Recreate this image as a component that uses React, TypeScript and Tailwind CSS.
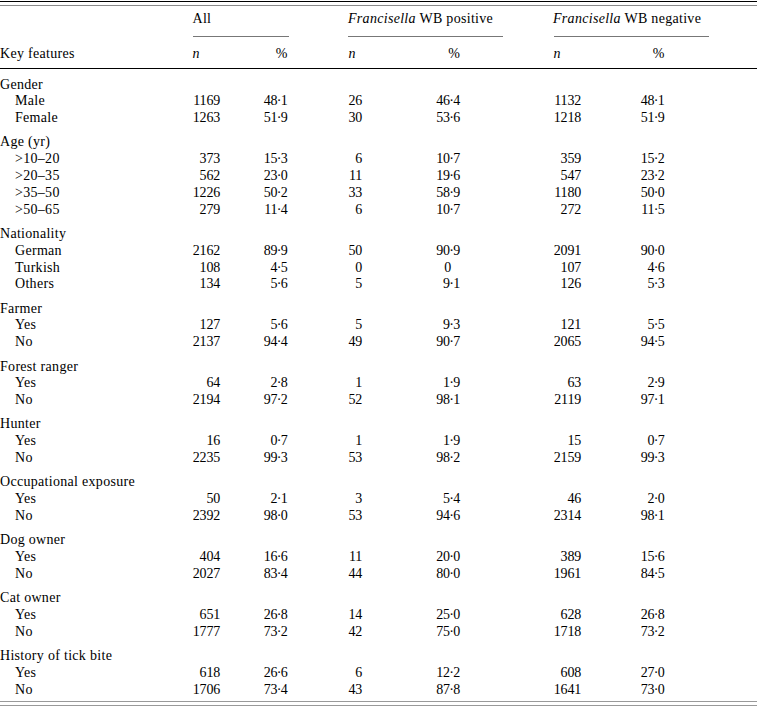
type Row = [string, string, string, string, string, string, string];

const groups: { title: string; rows: Row[] }[] = [
  {
    title: "Gender",
    rows: [
      ["Male", "1169", "48·1", "26", "46·4", "1132", "48·1"],
      ["Female", "1263", "51·9", "30", "53·6", "1218", "51·9"],
    ],
  },
  {
    title: "Age (yr)",
    rows: [
      [">10–20", "373", "15·3", "6", "10·7", "359", "15·2"],
      [">20–35", "562", "23·0", "11", "19·6", "547", "23·2"],
      [">35–50", "1226", "50·2", "33", "58·9", "1180", "50·0"],
      [">50–65", "279", "11·4", "6", "10·7", "272", "11·5"],
    ],
  },
  {
    title: "Nationality",
    rows: [
      ["German", "2162", "89·9", "50", "90·9", "2091", "90·0"],
      ["Turkish", "108", "4·5", "0", "0", "107", "4·6"],
      ["Others", "134", "5·6", "5", "9·1", "126", "5·3"],
    ],
  },
  {
    title: "Farmer",
    rows: [
      ["Yes", "127", "5·6", "5", "9·3", "121", "5·5"],
      ["No", "2137", "94·4", "49", "90·7", "2065", "94·5"],
    ],
  },
  {
    title: "Forest ranger",
    rows: [
      ["Yes", "64", "2·8", "1", "1·9", "63", "2·9"],
      ["No", "2194", "97·2", "52", "98·1", "2119", "97·1"],
    ],
  },
  {
    title: "Hunter",
    rows: [
      ["Yes", "16", "0·7", "1", "1·9", "15", "0·7"],
      ["No", "2235", "99·3", "53", "98·2", "2159", "99·3"],
    ],
  },
  {
    title: "Occupational exposure",
    rows: [
      ["Yes", "50", "2·1", "3", "5·4", "46", "2·0"],
      ["No", "2392", "98·0", "53", "94·6", "2314", "98·1"],
    ],
  },
  {
    title: "Dog owner",
    rows: [
      ["Yes", "404", "16·6", "11", "20·0", "389", "15·6"],
      ["No", "2027", "83·4", "44", "80·0", "1961", "84·5"],
    ],
  },
  {
    title: "Cat owner",
    rows: [
      ["Yes", "651", "26·8", "14", "25·0", "628", "26·8"],
      ["No", "1777", "73·2", "42", "75·0", "1718", "73·2"],
    ],
  },
  {
    title: "History of tick bite",
    rows: [
      ["Yes", "618", "26·6", "6", "12·2", "608", "27·0"],
      ["No", "1706", "73·4", "43", "87·8", "1641", "73·0"],
    ],
  },
];

const cols =
  "grid grid-cols-[192.5px_27.5px_67.5px_61px_13.5px_98px_93.5px_27.5px_83.5px_1fr] h-[16.8px] leading-[16.8px]";

// numbers use a raised point that sits tight between digits
const Num = ({ v, className = "" }: { v: string; className?: string }) => {
  const [a, b] = v.split("·");
  return (
    <span className={`whitespace-nowrap text-right tracking-[-0.2px] ${className}`}>
      {a}
      {b !== undefined && (
        <>
          <span className="mx-[-0.6px]">·</span>
          {b}
        </>
      )}
    </span>
  );
};

const App = () => {
  return (
    <div className="bg-white w-[757px] h-[706px] overflow-hidden font-['Liberation_Serif','Times_New_Roman',serif] text-[14px] text-black">
      {/* double rule on top */}
      <div className="mt-[1px] border-t border-black" />
      <div className="mt-[2.5px] border-t border-[#8a8a8a]" />

      {/* column group heads */}
      <div className="mt-[5.4px] flex h-[16.8px] leading-[16.8px] tracking-[0.3px]">
        <div className="w-[192.5px]" />
        <div className="w-[155.5px]">All</div>
        <div className="w-[205px]">
          <i>Francisella</i> WB positive
        </div>
        <div>
          <i>Francisella</i> WB negative
        </div>
      </div>
      <div className="mt-[8.6px] flex">
        <div className="w-[192.5px]" />
        <div className="w-[96px] border-t border-[#777]" />
        <div className="w-[59.5px]" />
        <div className="w-[155px] border-t border-[#777]" />
        <div className="w-[50.5px]" />
        <div className="w-[155px] border-t border-[#777]" />
      </div>
      <div className={`${cols} mt-[8.4px]`}>
        <span className="tracking-[0.3px]">Key features</span>
        <i>n</i>
        <span className="text-right">%</span>
        <span />
        <i>n</i>
        <span className="text-right">%</span>
        <span />
        <i>n</i>
        <span className="text-right">%</span>
      </div>
      <div className="mt-[5.6px] border-t border-black" />

      {/* body */}
      {groups.map((g) => (
        <div key={g.title} className="pt-[7.5px]">
          <div className={cols}>
            <span className="whitespace-nowrap tracking-[0.3px]">{g.title}</span>
          </div>
          {g.rows.map((r, i) => (
            <div key={i} className={cols}>
              <span className="pl-[15px] tracking-[0.3px]">{r[0]}</span>
              <Num v={r[1]} />
              <Num v={r[2]} />
              <span />
              <Num v={r[3]} />
              <Num v={r[4]} className={r[4] === "0" ? "pr-[9px]" : ""} />
              <span />
              <Num v={r[5]} />
              <Num v={r[6]} />
            </div>
          ))}
        </div>
      ))}

      {/* closing double rule */}
      <div className="mt-[2.6px] border-t border-[#999]" />
      <div className="mt-[3.3px] border-t border-[#999]" />
    </div>
  );
};

export default App;
